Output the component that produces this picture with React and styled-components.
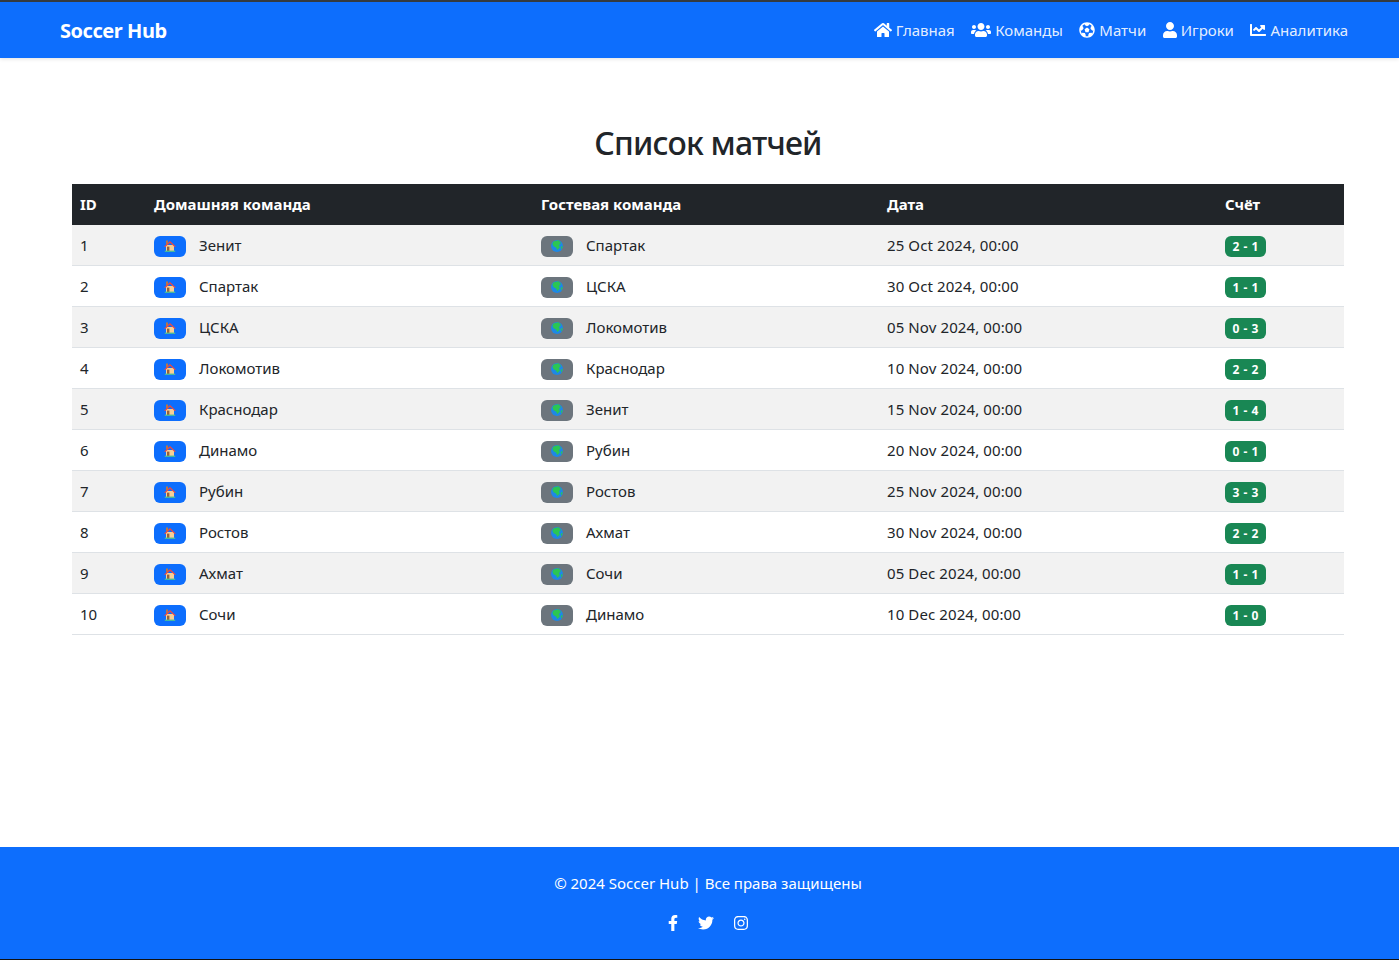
import React from 'react';
import styled, { createGlobalStyle } from 'styled-components';
import { FaHome, FaUsers, FaFutbol, FaUser, FaChartLine, FaFacebookF, FaTwitter, FaInstagram } from 'react-icons/fa';

const GlobalStyle = createGlobalStyle`
  html, body {
    margin: 0;
    padding: 0;
  }
  body {
    background: #fff;
    color: #212529;
    font-family: "Noto Sans", "Open Sans", sans-serif;
    font-size: 16px;
    line-height: 24px;
  }
`;

const links = [
  { icon: FaHome, width: 18, label: 'Главная' },
  { icon: FaUsers, width: 20, label: 'Команды' },
  { icon: FaFutbol, width: 16, label: 'Матчи' },
  { icon: FaUser, width: 14, label: 'Игроки' },
  { icon: FaChartLine, width: 16, label: 'Аналитика' },
];

const socials = [
  { icon: FaFacebookF, width: 10 },
  { icon: FaTwitter, width: 16 },
  { icon: FaInstagram, width: 14 },
];

const matches = [
  [1, 'Зенит', 'Спартак', '25 Oct 2024, 00:00', '2 - 1'],
  [2, 'Спартак', 'ЦСКА', '30 Oct 2024, 00:00', '1 - 1'],
  [3, 'ЦСКА', 'Локомотив', '05 Nov 2024, 00:00', '0 - 3'],
  [4, 'Локомотив', 'Краснодар', '10 Nov 2024, 00:00', '2 - 2'],
  [5, 'Краснодар', 'Зенит', '15 Nov 2024, 00:00', '1 - 4'],
  [6, 'Динамо', 'Рубин', '20 Nov 2024, 00:00', '0 - 1'],
  [7, 'Рубин', 'Ростов', '25 Nov 2024, 00:00', '3 - 3'],
  [8, 'Ростов', 'Ахмат', '30 Nov 2024, 00:00', '2 - 2'],
  [9, 'Ахмат', 'Сочи', '05 Dec 2024, 00:00', '1 - 1'],
  [10, 'Сочи', 'Динамо', '10 Dec 2024, 00:00', '1 - 0'],
];

const HouseIcon = () => (
  <svg width="12" height="12" viewBox="0 0 12 12">
    <rect x="2" y="0.5" width="2" height="4" fill="#b5764a" />
    <rect x="2" y="5" width="8" height="6" fill="#f7cf95" />
    <path d="M6 1 L12 6.8 L10.4 6.8 L6 2.8 L1.6 6.8 L0 6.8 Z" fill="#f4473c" />
    <rect x="3" y="6.6" width="2.4" height="4.4" fill="#96613a" />
    <rect x="0.8" y="10.6" width="10.4" height="1.4" fill="#45b8a0" />
  </svg>
);

const GlobeIcon = () => (
  <svg width="12" height="12" viewBox="0 0 12 12">
    <circle cx="6" cy="6" r="6" fill="#1e88e5" />
    <path d="M2.5 1.5 L7.5 0.3 L10 3 L8 5 L8.8 7.4 L6.4 10 L5 7.4 L2.6 6.2 L1.4 3.8 Z" fill="#2bc653" />
    <path d="M9.6 7 L11.8 5.8 L10.6 9.4 Z" fill="#2bc653" />
  </svg>
);

const App = () => {
  return (
    <Page>
      <GlobalStyle />
      <Navbar>
        <Brand>Soccer Hub</Brand>
        <NavLinks>
          {links.map(({ icon: Icon, width, label }) => (
            <NavLink key={label}>
              <IconBox $w={width}><Icon /></IconBox>
              {label}
            </NavLink>
          ))}
        </NavLinks>
      </Navbar>

      <Main>
        <Title>Список матчей</Title>
        <Table>
          <colgroup>
            <col style={{ width: 74 }} />
            <col style={{ width: 387 }} />
            <col style={{ width: 346 }} />
            <col style={{ width: 338 }} />
            <col style={{ width: 127 }} />
          </colgroup>
          <thead>
            <tr>
              <HeadCell>ID</HeadCell>
              <HeadCell>Домашняя команда</HeadCell>
              <HeadCell>Гостевая команда</HeadCell>
              <HeadCell>Дата</HeadCell>
              <HeadCell>Счёт</HeadCell>
            </tr>
          </thead>
          <tbody>
            {matches.map(([id, home, away, date, score]) => (
              <Row key={id}>
                <Cell>{id}</Cell>
                <Cell>
                  <Team>
                    <TeamBadge $bg="#0d6efd"><HouseIcon /></TeamBadge>
                    {home}
                  </Team>
                </Cell>
                <Cell>
                  <Team>
                    <TeamBadge $bg="#6c757d"><GlobeIcon /></TeamBadge>
                    {away}
                  </Team>
                </Cell>
                <DateCell>{date}</DateCell>
                <Cell><ScoreBadge>{score}</ScoreBadge></Cell>
              </Row>
            ))}
          </tbody>
        </Table>
      </Main>

      <Footer>
        <FooterText>© 2024 Soccer Hub | Все права защищены</FooterText>
        <Socials>
          {socials.map(({ icon: Icon, width }) => (
            <IconBox key={width} $w={width}><Icon /></IconBox>
          ))}
        </Socials>
      </Footer>
    </Page>
  );
};

const Page = styled.div`
  min-height: 960px;
  display: flex;
  flex-direction: column;
`;

const Navbar = styled.nav`
  height: 56px;
  border-top: 2px solid #343a40;
  background: #0d6efd;
  padding: 0 51px 0 60px;
  display: flex;
  justify-content: space-between;
  align-items: center;
  box-shadow: 0 1px 4px rgba(0, 0, 0, 0.12);
`;

const Brand = styled.div`
  color: #fff;
  font-size: 20px;
  font-weight: 700;
  letter-spacing: -0.45px;
  padding-top: 2px;
`;

const NavLinks = styled.div`
  display: flex;
  gap: 16.5px;
`;

const NavLink = styled.div`
  color: rgba(255, 255, 255, 0.9);
  font-size: 15px;
  display: flex;
  align-items: center;
  gap: 4px;
`;

const IconBox = styled.span`
  display: flex;
  color: #fff;
  svg {
    width: ${(p) => p.$w}px;
    height: 16px;
  }
`;

const Main = styled.main`
  flex: 1;
  padding: 66px 55px 0 72px;
`;

const Title = styled.h1`
  margin: 0 0 22px;
  font-size: 32px;
  font-weight: 500;
  letter-spacing: -0.8px;
  line-height: 38px;
  text-align: center;
`;

const Table = styled.table`
  width: 1272px;
  table-layout: fixed;
  border-collapse: separate;
  border-spacing: 0;
`;

const HeadCell = styled.th`
  height: 41px;
  padding: 6px 8px 8px;
  box-sizing: border-box;
  background: #212529;
  color: #fff;
  font-size: 15px;
  font-weight: 700;
  text-align: left;
`;

const Row = styled.tr`
  &:nth-child(odd) {
    background: #f2f2f2;
  }
`;

const Cell = styled.td`
  height: 41px;
  padding: 0 8px;
  box-sizing: border-box;
  border-bottom: 1px solid #dee2e6;
  font-size: 15px;
`;

const DateCell = styled(Cell)`
  letter-spacing: 0.1px;
`;

const Team = styled.div`
  display: flex;
  align-items: center;
  gap: 13px;
`;

const TeamBadge = styled.span`
  width: 32px;
  height: 21px;
  margin-top: 2px;
  border-radius: 6px;
  background: ${(p) => p.$bg};
  display: flex;
  align-items: center;
  justify-content: center;
`;

const ScoreBadge = styled.span`
  display: inline-block;
  width: 41px;
  height: 21px;
  border-radius: 6px;
  background: #198754;
  color: #fff;
  font-size: 12px;
  font-weight: 700;
  line-height: 21px;
  text-align: center;
  word-spacing: 1px;
  vertical-align: middle;
`;

const Footer = styled.footer`
  height: 113px;
  box-sizing: border-box;
  border-bottom: 1px solid #111;
  background: #0d6efd;
  color: #fff;
  padding: 24px 0 0 17px;
  text-align: center;
`;

const FooterText = styled.div`
  font-size: 15px;
`;

const Socials = styled.div`
  margin-top: 20px;
  display: flex;
  justify-content: center;
  align-items: center;
  gap: 20px;
`;

export default App;
